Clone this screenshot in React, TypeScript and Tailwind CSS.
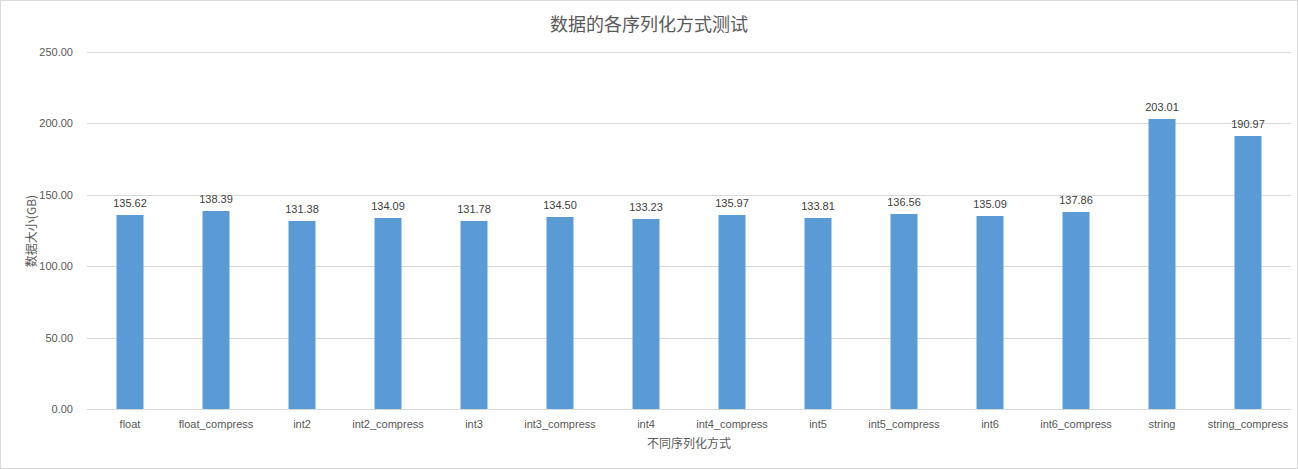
const data: [string, number][] = [
  ["float", 135.62], ["float_compress", 138.39], ["int2", 131.38], ["int2_compress", 134.09],
  ["int3", 131.78], ["int3_compress", 134.5], ["int4", 133.23], ["int4_compress", 135.97],
  ["int5", 133.81], ["int5_compress", 136.56], ["int6", 135.09], ["int6_compress", 137.86],
  ["string", 203.01], ["string_compress", 190.97],
];
const H = 357;
export default function App() {
  const font = { fontFamily: '"Noto Sans CJK SC", "Liberation Sans", sans-serif' };
  return (
    <div className="w-[1298px] h-[469px] bg-white border border-[#d9d9d9] relative text-[#595959]" style={font}>
      <div className="absolute left-0 right-0 top-[10px] text-center text-[18px] leading-[24px] text-[#595959]">数据的各序列化方式测试</div>
      <div className="absolute left-[30px] top-[230px] -translate-x-1/2 -translate-y-1/2 -rotate-90 text-[12px] whitespace-nowrap">数据大小(GB)</div>
      <div className="absolute left-[20px] w-[52px] top-[51px] h-[357px]">
        {[250, 200, 150, 100, 50, 0].map((v, i) => (
          <div key={v} className="absolute right-0 text-[11px] leading-[14px] -translate-y-1/2" style={{ top: (i * H) / 5, fontFamily: '"Liberation Sans", sans-serif' }}>{v.toFixed(2)}</div>
        ))}
      </div>
      <div className="absolute left-[86px] top-[51px] w-[1204px] h-[357px]">
        {[0, 1, 2, 3, 4, 5].map((i) => (
          <div key={i} className="absolute left-0 right-0 h-px bg-[#d9d9d9]" style={{ top: (i * H) / 5 }} />
        ))}
        <div className="absolute inset-0 flex">
          {data.map(([n, v]) => (
            <div key={n} className="flex-1 relative">
              <div className="absolute left-1/2 -translate-x-1/2 bottom-0 w-[27px] bg-[#5b9bd5]" style={{ height: (v / 250) * H }} />
              <div className="absolute left-0 right-0 text-center text-[11px] leading-[14px] text-[#404040]" style={{ bottom: (v / 250) * H + 5, fontFamily: '"Liberation Sans", sans-serif' }}>{v.toFixed(2)}</div>
              <div className="absolute left-0 right-0 top-[365px] text-center text-[11px] leading-[14px] whitespace-nowrap" style={{ fontFamily: '"Liberation Sans", sans-serif' }}>{n}</div>
            </div>
          ))}
        </div>
      </div>
      <div className="absolute left-[86px] w-[1204px] top-[434px] text-center text-[12px] leading-[16px]">不同序列化方式</div>
    </div>
  );
}
